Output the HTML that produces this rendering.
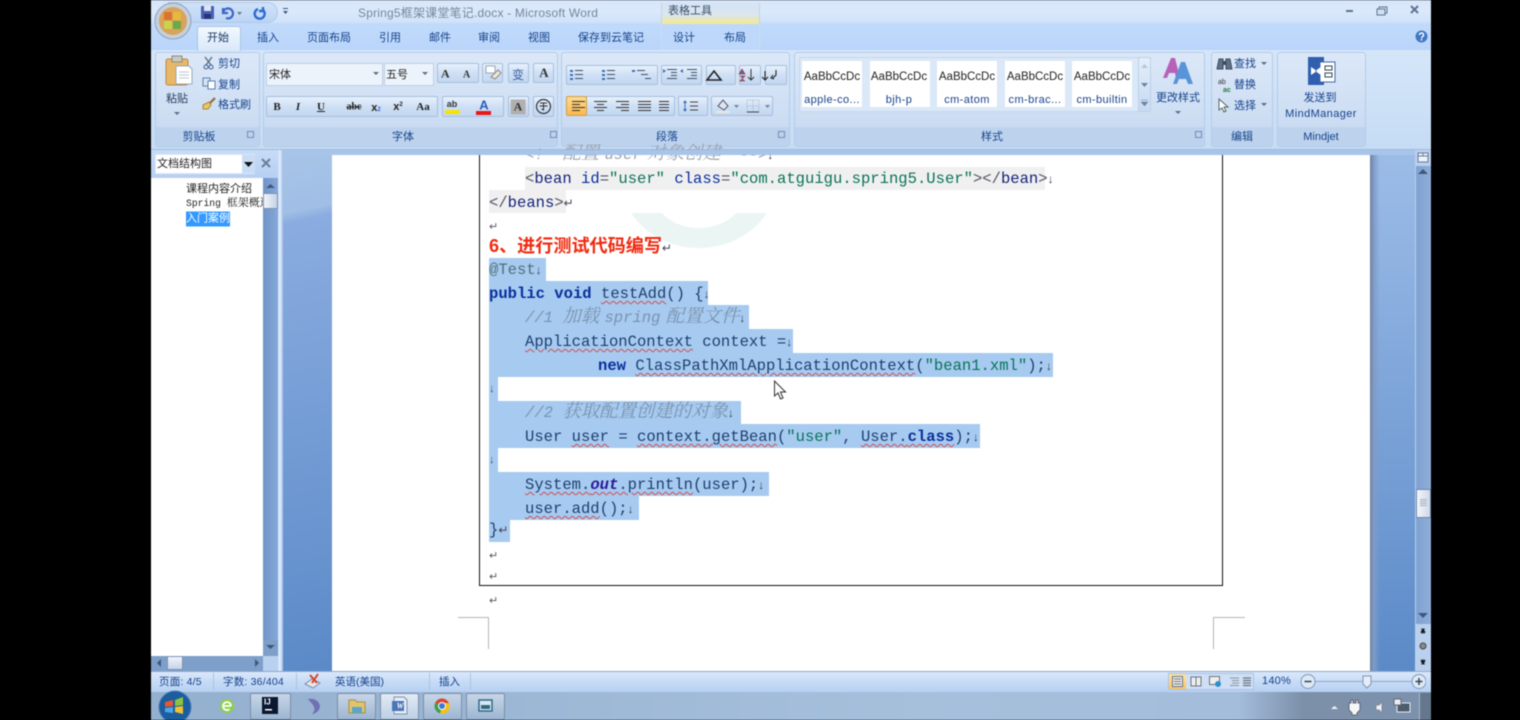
<!DOCTYPE html>
<html lang="zh"><head><meta charset="utf-8"><title>Word</title>
<style>
*{box-sizing:border-box}
html,body{margin:0;padding:0;width:1520px;height:720px;overflow:hidden;background:#000}
#w{position:absolute;left:0;top:0;width:1520px;height:720px;overflow:hidden;background:#000;filter:blur(.5px);font-family:"Liberation Sans","Noto Sans CJK SC",sans-serif}
#w div,#w span.a,#w svg{position:absolute}
.t{position:absolute;white-space:pre;font-size:11px;line-height:14px;color:#15428b;transform:translate(-50%,calc(-50% + 1px))}
.l{position:absolute;white-space:pre;font-size:11px;line-height:14px;color:#15428b;transform:translateY(calc(-50% + 1px))}
.g{background:linear-gradient(#dce8f8,#c6d9f1);border:1px solid #b3cbe8;border-radius:3px;top:52px;height:95px}
.gb{left:0;right:0;bottom:0;height:19px;background:#bdd3ed;border-radius:0 0 3px 3px}
.b{background:linear-gradient(#e8f1fc,#cfe0f5 50%,#c3d7f0);border:1px solid #a5bfdd;border-radius:2px}
.sw{background:#fff;top:61px;width:60px;height:46px}
.c{position:absolute;white-space:pre;font-family:"Liberation Mono","Noto Serif CJK SC",monospace;font-size:15.55px;line-height:24px;height:24px;color:#1f3f6f;transform:translateY(calc(-50% + 1px))}
.z{font-family:"Noto Serif CJK SC",serif;font-size:18.4px;line-height:0}
.ws{word-spacing:-4px}
.sel{background:#a6caf0;left:489px}
.k{color:#0a2f9c;font-weight:bold}.s{color:#0b7358}.m{color:#7b93ad;font-style:italic}
.u{text-decoration:underline wavy #d05050 1px;text-underline-offset:2px}
.r{font-size:12px;color:#445;font-style:normal;font-weight:normal;font-family:"Liberation Sans",sans-serif}
.ret{position:absolute;left:489px;font-size:11px;line-height:10px;color:#556;transform:translateY(-50%)}
.sb{font-size:10.5px}
</style></head><body><div id="w">

<!-- window -->
<div style="left:151px;top:0;width:1280px;height:720px;background:#c4dbf8"></div>
<div style="left:151px;top:0;width:1280px;height:23px;background:linear-gradient(#d6e6fa,#dbe9fb 50%,#cfe2f9)"></div>
<div style="left:151px;top:23px;width:1280px;height:27px;background:linear-gradient(#c2dbfb,#b9d5fa)"></div>
<div style="left:151px;top:50px;width:1280px;height:100px;background:linear-gradient(#d5e6f9,#c6dcf5);border-bottom:1px solid #9fbbdc"></div>

<!-- QAT -->
<div style="left:168px;top:2px;width:110px;height:21px;background:linear-gradient(#cfe2f9,#bcd5f5);border:1px solid #b0c9e8;border-radius:0 11px 11px 0"></div>
<!-- office orb -->
<svg style="left:154px;top:2px" width="38" height="38" viewBox="0 0 38 38"><circle cx="19" cy="19" r="18" fill="#c4d0de" stroke="#8ea2b8"/><circle cx="19" cy="19" r="14" fill="#d9a35a"/><rect x="10" y="10" width="8" height="8" fill="#d9742f"/><rect x="19" y="10" width="8" height="8" fill="#e8b93c"/><rect x="10" y="19" width="8" height="8" fill="#c9d34c"/><rect x="19" y="19" width="8" height="8" fill="#6aa84a"/></svg>
<svg style="left:200px;top:5px" width="90" height="16" viewBox="0 0 90 16"><rect x="1" y="1" width="13" height="13" fill="#4a5fb0" rx="1"/><rect x="4" y="1" width="7" height="5" fill="#dde5f5"/><rect x="4" y="9" width="7" height="5" fill="#26357a"/><path d="M23 8a5 5 0 1 1 3 5M23 3v5h5" fill="none" stroke="#3d66c8" stroke-width="2.2"/><path d="M37 7h5l-2.500 3z" fill="#667c9c"/><path d="M58 4a5 5 0 1 0 5 1M63 2v4h-4" fill="none" stroke="#2f6bd0" stroke-width="2.400"/><path d="M83 6h5l-2.500 3zM83 3h5v1h-5z" fill="#3e5878"/></svg>

<!-- title -->
<div class="l" style="left:358px;top:12px;font-size:12px;color:#76869c;letter-spacing:.2px">Spring5框架课堂笔记.docx - Microsoft Word</div>
<div style="left:661px;top:3px;width:99px;height:21px;background:linear-gradient(#d4e3f6,#dbe6ee 55%,#f5e98e);border-left:1px solid #c2d2e6;border-right:1px solid #c2d2e6"></div>
<div style="left:661px;top:24px;width:99px;height:26px;background:#bdd8fa;border-left:1px solid #c9ddf5;border-right:1px solid #c9ddf5"></div>
<div class="l" style="left:668px;top:10px;color:#3c4e68">表格工具</div>
<svg style="left:1335px;top:3px" width="90" height="14" viewBox="0 0 90 14"><rect x="11" y="7" width="7" height="2" fill="#5f748e"/><rect x="44" y="4" width="8" height="6" fill="none" stroke="#5f748e"/><rect x="42" y="6" width="8" height="6" fill="#cfe0f6" stroke="#5f748e"/><path d="M76 3l7 7M83 3l-7 7" stroke="#5f748e" stroke-width="2"/></svg>

<!-- tabs -->
<div style="left:197px;top:26px;width:44px;height:25px;background:linear-gradient(#f3f8fe,#d9e8fa);border:1px solid #a9c4e4;border-bottom:none;border-radius:3px 3px 0 0"></div>
<div class="t" style="left:218px;top:37px;color:#15345f">开始</div>
<div class="t" style="left:268px;top:37px">插入</div>
<div class="t" style="left:329px;top:37px">页面布局</div>
<div class="t" style="left:390px;top:37px">引用</div>
<div class="t" style="left:440px;top:37px">邮件</div>
<div class="t" style="left:489px;top:37px">审阅</div>
<div class="t" style="left:539px;top:37px">视图</div>
<div class="t" style="left:611px;top:37px">保存到云笔记</div>
<div class="t" style="left:684px;top:37px">设计</div>
<div class="t" style="left:735px;top:37px">布局</div>
<svg style="left:1414px;top:29px" width="15" height="15" viewBox="0 0 15 15"><circle cx="7.500" cy="7.500" r="6.500" fill="#3f78c8" stroke="#c4d6ec"/><path d="M5.500 6a2 2 0 1 1 3 1.700c-.8.500-1 .8-1 1.500" fill="none" stroke="#fff" stroke-width="1.400"/><rect x="6.800" y="10" width="1.500" height="1.500" fill="#fff"/></svg>

<!-- groups -->
<div class="g" style="left:155px;width:105px"><div class="gb"></div></div>
<div class="g" style="left:263px;width:295px"><div class="gb"></div></div>
<div class="g" style="left:561px;width:229px"><div class="gb"></div></div>
<div class="g" style="left:794px;width:411px"><div class="gb"></div></div>
<div class="g" style="left:1211px;width:62px"><div class="gb"></div></div>
<div class="g" style="left:1277px;width:89px"><div class="gb"></div></div>
<div class="t" style="left:199px;top:136px">剪贴板</div>
<div class="t" style="left:403px;top:136px">字体</div>
<div class="t" style="left:667px;top:136px">段落</div>
<div class="t" style="left:992px;top:136px">样式</div>
<div class="t" style="left:1242px;top:136px">编辑</div>
<div class="t" style="left:1321px;top:136px">Mindjet</div>
<svg style="left:247px;top:131px" width="960" height="9" viewBox="0 0 960 9"><g fill="none" stroke="#6f8fb5"><rect x=".5" y=".5" width="6" height="6"/><rect x="303.500" y=".5" width="6" height="6"/><rect x="531.500" y=".5" width="6" height="6"/><rect x="948.500" y=".5" width="6" height="6"/></g></svg>

<!-- clipboard -->
<svg style="left:165px;top:55px" width="28" height="32" viewBox="0 0 28 32"><rect x="1" y="4" width="22" height="26" rx="2" fill="#e8b868" stroke="#b98a40"/><rect x="7" y="1" width="10" height="6" fill="#c9c9c0" stroke="#8a8a80"/><path d="M11 11h13l3 3v15H11z" fill="#fff" stroke="#9aa8b8"/><path d="M14 17h10M14 20h10M14 23h10" stroke="#bcc6d2"/></svg>
<div class="t" style="left:177px;top:98px;color:#253a58">粘贴</div>
<svg style="left:174px;top:112px" width="7" height="5" viewBox="0 0 7 5"><path d="M0 0h6l-3 3z" fill="#5a6f8c"/></svg>
<svg style="left:202px;top:56px" width="14" height="56" viewBox="0 0 14 56"><path d="M3 1l6 8M10 1L4 9" stroke="#5a6b80" stroke-width="1.300"/><circle cx="4" cy="11" r="2" fill="none" stroke="#3d5f98"/><circle cx="9" cy="11" r="2" fill="none" stroke="#3d5f98"/><rect x="1" y="22" width="7" height="8" fill="#d8e4f5" stroke="#5a7fb0"/><rect x="6" y="25" width="7" height="8" fill="#fff" stroke="#5a7fb0"/><path d="M13 42l-6 6" stroke="#8a6a30" stroke-width="2"/><path d="M1 49l6-3 2 3-3 4-5 0z" fill="#e9c764" stroke="#a88838"/></svg>
<div class="l" style="left:218px;top:63px">剪切</div>
<div class="l" style="left:218px;top:84px">复制</div>
<div class="l" style="left:218px;top:104px">格式刷</div>

<!-- font -->
<div style="left:266px;top:63px;width:117px;height:23px;background:#edf3fb;border:1px solid #bcd0e8"></div>
<div style="left:384px;top:63px;width:50px;height:23px;background:#edf3fb;border:1px solid #bcd0e8"></div>
<div class="l" style="left:269px;top:74px;color:#222">宋体</div>
<div class="l" style="left:386px;top:74px;color:#222">五号</div>
<svg style="left:373px;top:72px" width="55" height="5" viewBox="0 0 55 5"><path d="M0 0h6l-3 3zM49 0h6l-3 3z" fill="#5a6f8c"/></svg>
<div class="b" style="left:437px;top:63px;width:42px;height:20px"></div>
<div class="l" style="left:441px;top:73px;font:bold 12px 'Liberation Serif',serif;color:#333">A</div>
<div class="l" style="left:463px;top:74px;font:bold 10px 'Liberation Serif',serif;color:#333">A</div>
<div class="b" style="left:482px;top:63px;width:21px;height:20px"></div>
<svg style="left:484px;top:65px" width="18" height="16" viewBox="0 0 18 16"><rect x="2" y="1" width="9" height="7" fill="#fff" stroke="#98a6b8"/><path d="M7 12l7-7 3 3-6 6z" fill="#f2e8d8" stroke="#8a8a8a"/></svg>
<div class="b" style="left:508px;top:63px;width:21px;height:20px"></div>
<div class="t" style="left:518px;top:74px;font-size:12px;color:#3b5fa0">变</div>
<div class="b" style="left:533px;top:63px;width:21px;height:20px"></div>
<div class="t" style="left:544px;top:72px;font:bold 13px 'Liberation Serif',serif;color:#333">A</div>

<div class="b" style="left:266px;top:96px;width:172px;height:21px"></div>
<div class="t" style="left:277px;top:106px;font:bold 11px 'Liberation Serif',serif;color:#222">B</div>
<div class="t" style="left:298px;top:106px;font:italic bold 11px 'Liberation Serif',serif;color:#222">I</div>
<div class="t" style="left:321px;top:106px;font:bold 11px 'Liberation Serif',serif;color:#222;text-decoration:underline">U</div>
<div class="t" style="left:354px;top:106px;font:bold 10px 'Liberation Serif',serif;color:#222;text-decoration:line-through">abc</div>
<div class="t" style="left:376px;top:107px;font:bold 11px 'Liberation Sans',sans-serif;color:#222">x<span style="font-size:6px;color:#36c">2</span></div>
<div class="t" style="left:398px;top:106px;font:bold 11px 'Liberation Sans',sans-serif;color:#222">x<span style="font-size:6px;vertical-align:4px">2</span></div>
<div class="t" style="left:423px;top:106px;font:bold 11px 'Liberation Serif',serif;color:#222">Aa</div>
<div class="b" style="left:442px;top:96px;width:62px;height:21px"></div>
<div class="t" style="left:452px;top:103px;font:bold 9px 'Liberation Sans',sans-serif;color:#333">ab</div>
<div style="left:445px;top:110px;width:15px;height:4px;background:#f7e300"></div>
<div class="t" style="left:484px;top:104px;font:bold 13px 'Liberation Sans',sans-serif;color:#2c5fb8">A</div>
<div style="left:476px;top:111px;width:15px;height:4px;background:#e81818"></div>
<div class="b" style="left:508px;top:96px;width:21px;height:21px"></div>
<div class="t" style="left:518px;top:106px;font:bold 12px 'Liberation Serif',serif;color:#333;background:#b0b0b0;padding:0 3px">A</div>
<div class="b" style="left:533px;top:96px;width:21px;height:21px"></div>
<svg style="left:535px;top:98px" width="17" height="17" viewBox="0 0 17 17"><circle cx="8.500" cy="8.500" r="7" fill="none" stroke="#333" stroke-width="1.200"/><path d="M5 5h7M8.500 5v7l-2-1M4.500 8h8" stroke="#333" fill="none"/></svg>

<!-- paragraph -->
<div class="b" style="left:566px;top:65px;width:92px;height:20px"></div>
<div class="b" style="left:661px;top:65px;width:41px;height:20px"></div>
<div class="b" style="left:706px;top:65px;width:30px;height:20px"></div>
<div class="b" style="left:739px;top:65px;width:22px;height:20px"></div>
<div class="b" style="left:765px;top:65px;width:22px;height:20px"></div>
<svg style="left:569px;top:68px" width="216" height="15" viewBox="0 0 216 15"><g fill="none" stroke="#3e5068" stroke-width="1.100"><path d="M6 2.500h8M6 6.500h8M6 10.500h8M38 2.500h8M38 6.500h8M38 10.500h8M68 2.500h8M72 6.500h7M76 10.500h6"/><path d="M98 1.500h10M102 4.500h6M102 7.500h6M98 10.500h10M118 1.500h10M122 4.500h6M122 7.500h6M118 10.500h10"/><path d="M138 12h14l-7-9z" stroke="#222" stroke-width="1.600"/><path d="M196 3v9M193 9l3 3 3-3M207 2v5l-3 3M204 7l-2 3 3 1" stroke="#222"/></g><g fill="#3b6fb8"><rect x="1" y="2" width="3" height="2"/><rect x="1" y="6" width="3" height="2"/><rect x="1" y="10" width="3" height="2"/><rect x="33" y="2" width="3" height="2"/><rect x="33" y="6" width="3" height="2"/><rect x="33" y="10" width="3" height="2"/><rect x="63" y="2" width="3" height="2"/><path d="M94 1l3 2-3 2zM114 1l-3 2 3 2z"/></g><path d="M173 1l3 5h-6zM171 8h5l-5 5h5" fill="#3b6fb8" stroke="#c0392b" stroke-width=".7"/><path d="M182 1v11M179 9l3 3 3-3" stroke="#333" fill="none"/></svg>
<div class="b" style="left:566px;top:96px;width:109px;height:20px"></div>
<div style="left:566px;top:96px;width:21px;height:20px;background:linear-gradient(#fedb8a,#fdb84f);border:1px solid #c9a050;border-radius:2px"></div>
<svg style="left:569px;top:99px" width="100" height="14" viewBox="0 0 100 14"><g fill="none" stroke="#333" stroke-width="1.100"><path d="M3 2.500h13M3 5.500h8M3 8.500h13M3 11.500h8M25 2.500h13M28 5.500h7M25 8.500h13M28 11.500h7M47 2.500h13M52 5.500h8M47 8.500h13M52 11.500h8M69 2.500h13M69 5.500h13M69 8.500h13M69 11.500h13M90 2.500h12M90 5.500h12M90 8.500h12M90 11.500h12"/></g></svg>
<div class="b" style="left:678px;top:96px;width:30px;height:20px"></div>
<svg style="left:682px;top:99px" width="22" height="14" viewBox="0 0 22 14"><path d="M3 1l2 3H1zM3 13l2-3H1z" fill="#3b6fb8"/><path d="M3 4v6" stroke="#3b6fb8"/><path d="M8 3h8M8 7h8M8 11h8" stroke="#444"/></svg>
<div class="b" style="left:711px;top:96px;width:62px;height:20px"></div>
<svg style="left:715px;top:98px" width="56" height="16" viewBox="0 0 56 16"><path d="M3 8l5-6 5 6-4 4z" fill="#dce6f2" stroke="#556"/><rect x="1" y="13" width="14" height="2" fill="#e8e8e0"/><path d="M19 7h5l-2.500 3zM50 7h5l-2.500 3z" fill="#6d84a2"/><rect x="32" y="2" width="12" height="12" fill="none" stroke="#aab4c2" stroke-dasharray="1 1"/><path d="M38 2v12M32 8h12" stroke="#aab4c2" stroke-dasharray="1 1"/><path d="M32 14h12" stroke="#444"/></svg>

<!-- styles -->
<div style="left:799px;top:57px;width:352px;height:55px;background:#dbe8f8;border:1px solid #c5d7ee;border-radius:2px"></div>
<div class="sw" style="left:802px"></div><div class="sw" style="left:870px"></div><div class="sw" style="left:937px"></div><div class="sw" style="left:1005px"></div><div class="sw" style="left:1072px"></div>
<div class="t" style="left:832px;top:76px;color:#222;font-size:11.500px">AaBbCcDc</div>
<div class="t" style="left:899px;top:76px;color:#222;font-size:11.500px">AaBbCcDc</div>
<div class="t" style="left:967px;top:76px;color:#222;font-size:11.500px">AaBbCcDc</div>
<div class="t" style="left:1035px;top:76px;color:#222;font-size:11.500px">AaBbCcDc</div>
<div class="t" style="left:1102px;top:76px;color:#222;font-size:11.500px">AaBbCcDc</div>
<div class="t" style="left:832px;top:99px;letter-spacing:.4px">apple-co...</div>
<div class="t" style="left:899px;top:99px;letter-spacing:.4px">bjh-p</div>
<div class="t" style="left:967px;top:99px;letter-spacing:.4px">cm-atom</div>
<div class="t" style="left:1035px;top:99px;letter-spacing:.4px">cm-brac...</div>
<div class="t" style="left:1102px;top:99px;letter-spacing:.4px">cm-builtin</div>
<div style="left:1138px;top:57px;width:13px;height:55px;background:linear-gradient(#e4eefa,#c7daf2);border:1px solid #bcd0e8;border-radius:2px"></div>
<svg style="left:1140px;top:63px" width="9" height="44" viewBox="0 0 9 44"><path d="M1 5h7L4.500 1z" fill="#b7c6da"/><path d="M1 20h7l-3.500 4z" fill="#6d84a2"/><path d="M1 37h7M1 39h7l-3.500 4z" stroke="#6d84a2" stroke-width=".5" fill="#6d84a2"/></svg>
<svg style="left:1162px;top:57px" width="32" height="28" viewBox="0 0 32 28"><path d="M1 21L9 1h4l5 20h-4l-1-5H7l-2 5z" fill="#b861b8"/><path d="M11 27L19 5h4l8 22h-5l-2-5h-7l-2 5z" fill="#5a94d8"/></svg>
<div class="t" style="left:1178px;top:97px">更改样式</div>
<svg style="left:1175px;top:111px" width="7" height="5" viewBox="0 0 7 5"><path d="M0 0h6l-3 3z" fill="#5a6f8c"/></svg>

<!-- editing -->
<svg style="left:1216px;top:56px" width="18" height="58" viewBox="0 0 18 58"><path d="M1 13l2-10h4v10zM10 13V3h4l2 10z" fill="#5f7288" stroke="#3d4c60"/><rect x="7" y="5" width="3" height="4" fill="#3d4c60"/><text x="2" y="28" font-size="7" fill="#333" font-family="Liberation Sans">ab</text><text x="7" y="36" font-size="7" font-weight="bold" fill="#2a7a3a" font-family="Liberation Sans">ac</text><path d="M3 43l0 11 3-2 2 4 2-1-2-4h4z" fill="#fff" stroke="#566"/></svg>
<div class="l" style="left:1234px;top:63px">查找</div>
<div class="l" style="left:1234px;top:84px">替换</div>
<div class="l" style="left:1234px;top:105px">选择</div>
<svg style="left:1261px;top:62px" width="6" height="44" viewBox="0 0 6 44"><path d="M0 0h6l-3 3zM0 41h6l-3 3z" fill="#5a6f8c"/></svg>

<!-- mindjet -->
<svg style="left:1307px;top:56px" width="30" height="30" viewBox="0 0 30 30"><rect x="1" y="1" width="16" height="28" fill="#2f5fae"/><rect x="13" y="6" width="15" height="20" fill="#fff" stroke="#4468a8"/><path d="M4 11l6 4-6 4zM14 11l-6 4 6 4z" fill="#fff"/><path d="M18 10h7v4h-7zM18 17h7v4h-7z" fill="none" stroke="#345"/></svg>
<div class="t" style="left:1320px;top:97px">发送到</div>
<div class="t" style="left:1321px;top:113px;letter-spacing:.4px">MindManager</div>

<!-- work area -->
<div style="left:151px;top:150px;width:1280px;height:521px;background:linear-gradient(#9dbde8,#5b8ac8)"></div>
<div style="left:283px;top:150px;width:49px;height:521px;background:linear-gradient(168deg,#a8c4e8 0,#a0bee6 12%,#8aace0 14%,#5b8ac8 100%)"></div>
<div style="left:1370px;top:150px;width:45px;height:521px;background:linear-gradient(90deg,#6f8098 0,#7f9cc8 8%,transparent 22%),linear-gradient(#9dbde8,#5b8ac8)"></div>
<div style="left:332px;top:155px;width:1038px;height:516px;background:#fff"></div>
<div style="left:283px;top:150px;width:1132px;height:5px;background:#a8c4ea"></div>

<!-- nav pane -->
<div style="left:151px;top:150px;width:127px;height:28px;background:linear-gradient(#c7dcf7,#b6d0f3)"></div>
<div style="left:278px;top:150px;width:5px;height:521px;background:linear-gradient(90deg,#c8def8,#e3effc 40%,#9fbde6)"></div>
<div style="left:155px;top:154px;width:100px;height:20px;background:#fff;border:1px solid #dbe8f9"></div>
<div style="left:242px;top:155px;width:13px;height:18px;background:#c9dcf5"></div>
<svg style="left:244px;top:162px" width="9" height="5" viewBox="0 0 9 5"><path d="M0 0h9L4.500 5z" fill="#111"/></svg>
<div class="l" style="left:157px;top:163px;color:#222">文档结构图</div>
<svg style="left:261px;top:158px" width="10" height="10" viewBox="0 0 10 10"><path d="M1 1l8 8M9 1l-8 8" stroke="#6b7f99" stroke-width="2"/></svg>
<div style="left:151px;top:178px;width:112px;height:478px;background:#fff"></div>
<div style="left:263px;top:178px;width:15px;height:478px;background:linear-gradient(90deg,#6e94c8,#86a8d8)"></div>
<div style="left:263px;top:193px;width:15px;height:16px;background:linear-gradient(90deg,#f2f5fa,#c5d3e6);border:1px solid #7a93b8"></div>
<svg style="left:265px;top:183px" width="11" height="5" viewBox="0 0 11 5"><path d="M1 5h9L5.500 1z" fill="#3e587c"/></svg>
<div style="left:263px;top:640px;width:15px;height:16px;background:#7e9fc9"></div>
<svg style="left:265px;top:645px" width="11" height="5" viewBox="0 0 11 5"><path d="M1 0h9L5.500 4z" fill="#3e587c"/></svg>
<div class="l" style="left:186px;top:188px;color:#222">课程内容介绍</div>
<div class="l" style="left:186px;top:203px;color:#222;width:77px;overflow:hidden;font-size:9.700px;font-family:'Liberation Mono','Noto Serif CJK SC',monospace">Spring <span style="font-size:11px">框架概述</span></div>
<div class="l" style="left:186px;top:218px;color:#fff;background:#3399ff;line-height:15px">入门案例</div>
<div style="left:151px;top:656px;width:112px;height:15px;background:#7e9fc9"></div>
<div style="left:263px;top:656px;width:15px;height:15px;background:#b9d0ee"></div>
<div style="left:167px;top:656px;width:16px;height:14px;background:linear-gradient(#f2f5fa,#c5d3e6);border:1px solid #7a93b8"></div>
<svg style="left:156px;top:659px" width="104" height="9" viewBox="0 0 104 9"><path d="M5 0v8L1 4zM99 0v8l4-4z" fill="#3e587c"/></svg>

<!-- vertical scrollbar -->
<div style="left:1415px;top:150px;width:16px;height:521px;background:#b9d0ee"></div>
<div style="left:1416px;top:166px;width:15px;height:458px;background:linear-gradient(90deg,#7fa2d2,#8fadd8)"></div>
<svg style="left:1417px;top:152px" width="12" height="12" viewBox="0 0 12 12"><rect x="1" y="1" width="10" height="9" fill="#eef3fa" stroke="#667a98"/><path d="M1 4h10M6 1v3" stroke="#667a98"/></svg>
<svg style="left:1418px;top:169px" width="10" height="5" viewBox="0 0 10 5"><path d="M0 5h10L5 0z" fill="#3e587c"/></svg>
<div style="left:1416px;top:489px;width:15px;height:29px;background:linear-gradient(90deg,#f4f6fa,#cdd9e9);border:1px solid #7088ad"></div>
<div style="left:1420px;top:499px;width:7px;height:8px;background:repeating-linear-gradient(#a8b4c4 0 1px,#dfe6ef 1px 2px)"></div>
<svg style="left:1418px;top:613px" width="10" height="6" viewBox="0 0 10 6"><path d="M0 0h10L5 5z" fill="#3e587c"/></svg>
<svg style="left:1418px;top:627px" width="10" height="40" viewBox="0 0 10 40"><path d="M3 2h4M5 2L3 5h4zM3 6h4" stroke="#111" stroke-width=".7" fill="#111"/><circle cx="5" cy="19" r="3" fill="#8b8b8b" stroke="#444"/><path d="M3 33h4M5 37l-2-3h4zM3 37h4" stroke="#111" stroke-width=".7" fill="#111"/></svg>

<!-- page content -->
<div style="left:525px;top:167px;width:520px;height:23px;background:#f0f0f0"></div>
<div style="left:489px;top:190px;width:77px;height:23px;background:#f0f0f0"></div>
<svg style="left:630px;top:213px" width="140" height="36" viewBox="0 0 140 36"><path d="M1 0c15 22 40 35 68 35s53-13 68-35h-31c-8 9-22 15-37 15S40 9 32 0z" fill="#ebf6f4"/></svg>
<div style="left:479px;top:155px;width:1px;height:430px;background:#111"></div>
<div style="left:1222px;top:155px;width:1px;height:430px;background:#111"></div>
<div style="left:479px;top:585px;width:744px;height:1px;background:#111"></div>

<div class="sel" style="top:258px;width:57px;height:23px"></div>
<div class="sel" style="top:281px;width:219px;height:24px"></div>
<div class="sel" style="top:305px;width:260px;height:24px"></div>
<div class="sel" style="top:329px;width:304px;height:24px"></div>
<div class="sel" style="top:353px;width:564px;height:24px"></div>
<div class="sel" style="top:377px;width:9px;height:24px"></div>
<div class="sel" style="top:401px;width:252px;height:23px"></div>
<div class="sel" style="top:424px;width:491px;height:24px"></div>
<div class="sel" style="top:448px;width:9px;height:24px"></div>
<div class="sel" style="top:472px;width:280px;height:24px"></div>
<div class="sel" style="top:496px;width:150px;height:24px"></div>
<div class="sel" style="top:520px;width:21px;height:22px"></div>

<div class="c" style="left:525px;top:154px;color:#9aa4ae;font-style:italic">&lt;!  <span class="z">配置</span><span class="ws"> user </span><span class="z">对象创建</span>  --&gt;<span class="r">↓</span></div>
<div style="left:480px;top:150px;width:742px;height:5px;background:#a8c4ea"></div>
<div class="c" style="left:525px;top:178px;color:#556">&lt;<span style="color:#15237a">bean</span> <span style="color:#0a2f9c">id</span>=<span class="s">"user"</span> <span style="color:#0a2f9c">class</span>=<span class="s">"com.atguigu.spring5.User"</span>&gt;&lt;/<span style="color:#15237a">bean</span>&gt;<span class="r">↓</span></div>
<div class="c" style="left:489px;top:202px;color:#556">&lt;/<span style="color:#15237a">beans</span>&gt;<span class="r">↵</span></div>
<div class="ret" style="top:227px">↵</div>
<div class="c" style="left:489px;top:245px;color:#f02a10;font-family:'Liberation Sans','Noto Sans CJK SC',sans-serif;font-weight:bold;font-size:18.1px">6、进行测试代码编写<span class="r">↵</span></div>
<div class="c" style="left:489px;top:269px;color:#4f7078">@Test<span class="r">↓</span></div>
<div class="c" style="left:489px;top:293px"><span class="k">public void</span> <span class="u">testAdd</span>() {<span class="r">↓</span></div>
<div class="c m" style="left:525px;top:317px">//1 <span class="z">加载</span><span class="ws"> spring </span><span class="z">配置文件</span><span class="r">↓</span></div>
<div class="c" style="left:525px;top:341px"><span class="u">ApplicationContext</span> context =<span class="r">↓</span></div>
<div class="c" style="left:598px;top:365px"><span class="k">new</span> <span class="u">ClassPathXmlApplicationContext</span>(<span class="s">"bean1.xml"</span>);<span class="r">↓</span></div>
<div class="ret" style="top:389px">↓</div>
<div class="c m" style="left:525px;top:412px">//2 <span class="z">获取配置创建的对象</span><span class="r">↓</span></div>
<div class="c" style="left:525px;top:436px">User <span class="u">user</span> = <span class="u">context.getBean</span>(<span class="s">"user"</span>, <span class="u">User.<span style="color:#0a2f9c;font-weight:bold">class</span></span>);<span class="r">↓</span></div>
<div class="ret" style="top:460px">↓</div>
<div class="c" style="left:525px;top:484px"><span class="u">System.<span style="color:#2a1a9a;font-style:italic;font-weight:bold">out</span>.println</span>(user);<span class="r">↓</span></div>
<div class="c" style="left:525px;top:508px"><span class="u">user.add</span>();<span class="r">↓</span></div>
<div class="c" style="left:489px;top:529px">}<span class="r">↵</span></div>
<div class="ret" style="top:556px">↵</div>
<div class="ret" style="top:577px">↵</div>
<div class="ret" style="top:601px">↵</div>

<!-- crop marks -->
<div style="left:458px;top:617px;width:31px;height:1px;background:#b5b5b5"></div>
<div style="left:488px;top:617px;width:1px;height:32px;background:#b5b5b5"></div>
<div style="left:1213px;top:617px;width:32px;height:1px;background:#b5b5b5"></div>
<div style="left:1213px;top:617px;width:1px;height:32px;background:#b5b5b5"></div>

<!-- cursor -->
<svg style="left:773px;top:380px" width="14" height="20" viewBox="0 0 14 20"><path d="M1.500 1v15l3.500-3 2.500 6 2.500-1-2.500-6h5z" fill="#fff" stroke="#333"/></svg>

<!-- status bar -->
<div style="left:151px;top:671px;width:1280px;height:21px;background:linear-gradient(#dbe8fa,#c6dbf6 50%,#b7d1f3);border-top:1px solid #8fa9cc"></div>
<div class="l sb" style="left:159px;top:681px;letter-spacing:.2px">页面: 4/5</div>
<div class="l sb" style="left:223px;top:681px;letter-spacing:.2px">字数: 36/404</div>
<div class="l sb" style="left:335px;top:681px">英语(美国)</div>
<div class="l sb" style="left:439px;top:681px">插入</div>
<div style="left:213px;top:673px;width:1px;height:17px;background:#aac3e2"></div>
<div style="left:296px;top:673px;width:1px;height:17px;background:#aac3e2"></div>
<div style="left:429px;top:673px;width:1px;height:17px;background:#aac3e2"></div>
<div style="left:470px;top:673px;width:1px;height:17px;background:#aac3e2"></div>
<svg style="left:304px;top:672px" width="18" height="18" viewBox="0 0 18 18"><path d="M1 12l7-5 8 4-7 5z" fill="#e6e6ea" stroke="#7d8ca8"/><path d="M6 3l7 8M14 2L8 11" stroke="#d8452e" stroke-width="2"/></svg>
<div style="left:1168px;top:673px;width:86px;height:17px;background:#cfe0f6;border:1px solid #a9c3e3"></div>
<div style="left:1169px;top:674px;width:17px;height:15px;background:linear-gradient(#fee3a4,#fcc35e)"></div>
<svg style="left:1171px;top:675px" width="80" height="13" viewBox="0 0 80 13"><g fill="none" stroke="#6b7480"><rect x="1.500" y="1.500" width="10" height="10" fill="#eee"/><path d="M3 4h7M3 6.500h7M3 9h7"/><path d="M20 2h5v9h-5zM25 2h5v9h-5z" fill="#eee"/><rect x="38.500" y="1.500" width="10" height="8" fill="#eee"/><path d="M59 3h9M61 5.500h7M61 8h7M59 10.500h9" stroke="#8a94a0"/><path d="M72 3h8M72 5.500h8M72 8h8M72 10.500h8" stroke-width="1.300"/></g><circle cx="47" cy="9" r="3" fill="#2d8fc9"/></svg>
<div class="l sb" style="left:1262px;top:680px;font-size:11px;letter-spacing:.2px">140%</div>
<div style="left:1315px;top:681px;width:97px;height:1px;background:#8fa9cc"></div>
<svg style="left:1300px;top:673px" width="126" height="17" viewBox="0 0 126 17"><circle cx="8" cy="8.500" r="7" fill="#dfe9f6" stroke="#7e97b8"/><path d="M4.500 8.500h7" stroke="#345" stroke-width="1.500"/><path d="M63 3h8v8l-4 4-4-4z" fill="#e6edf6" stroke="#7e97b8"/><circle cx="119" cy="8.500" r="7" fill="#dfe9f6" stroke="#7e97b8"/><path d="M115.500 8.500h7M119 5v7" stroke="#345" stroke-width="1.500"/></svg>

<!-- taskbar -->
<div style="left:151px;top:692px;width:1280px;height:28px;background:linear-gradient(90deg,#94b0cf,#a6c0dc 60%,#a3bddb 85%,#7c90a9 90%,#7d92ad 100%)"></div>
<div style="left:1419px;top:693px;width:12px;height:27px;background:#65778c;border-left:1px solid #a8b8c8"></div>
<div class="b" style="left:250px;top:693px;width:41px;height:27px;background:linear-gradient(#c7d6e6,#9db6d2);border:1px solid #7a8ea6"></div>
<div class="b" style="left:337px;top:693px;width:39px;height:27px;background:linear-gradient(#c7d6e6,#9db6d2);border:1px solid #7a8ea6"></div>
<div class="b" style="left:380px;top:693px;width:39px;height:27px;background:linear-gradient(#e2ebf5,#bccfe4);border:1px solid #7a8ea6"></div>
<div class="b" style="left:423px;top:693px;width:39px;height:27px;background:linear-gradient(#c7d6e6,#9db6d2);border:1px solid #7a8ea6"></div>
<div class="b" style="left:466px;top:693px;width:39px;height:27px;background:linear-gradient(#c7d6e6,#9db6d2);border:1px solid #7a8ea6"></div>
<svg style="left:158px;top:690px" width="34" height="30" viewBox="0 0 34 30"><circle cx="17" cy="17" r="16" fill="#1c5d9e" stroke="#4a7fb4"/><path d="M7 12l8-2v6l-8 1z" fill="#e8552f"/><path d="M17 10l8-3v8l-8 1z" fill="#8cc43f"/><path d="M7 18l8-1v6l-8-1z" fill="#4aa7e8"/><path d="M17 17l8-1v8l-8-2z" fill="#f2c12e"/></svg>
<svg style="left:218px;top:696px" width="18" height="20" viewBox="0 0 18 20"><circle cx="9" cy="10" r="7" fill="#8ccf4a"/><path d="M5 10h8M13 10a4 4 0 1 0-1.500 3.200" fill="none" stroke="#fff" stroke-width="1.800"/></svg>
<svg style="left:262px;top:697px" width="16" height="17" viewBox="0 0 16 17"><rect width="16" height="17" fill="#0b1830"/><rect x="3" y="12" width="7" height="1.500" fill="#fff"/></svg>
<div class="l" style="left:264px;top:701px;font:bold 8px 'Liberation Sans',sans-serif;color:#fff">IJ</div>
<svg style="left:306px;top:697px" width="16" height="18" viewBox="0 0 16 18"><path d="M2 2c5-1 11 1 12 7 0 5-5 8-8 8 2-2 3-4 2-7-1-3-4-5-6-8z" fill="#6e72b5"/></svg>
<svg style="left:348px;top:698px" width="18" height="16" viewBox="0 0 18 16"><path d="M1 2h6l2 2h8v11H1z" fill="#e2c46e" stroke="#a88e44"/><path d="M4 9h10v6H4z" fill="#5ba6c8"/></svg>
<svg style="left:391px;top:696px" width="17" height="19" viewBox="0 0 17 19"><path d="M3 1h10l3 3v14H3z" fill="#e4ecf6" stroke="#7d90b0"/><rect x="1" y="5" width="12" height="10" fill="#4c75b8"/></svg>
<div class="t" style="left:400px;top:705px;font:italic bold 8px 'Liberation Serif',serif;color:#fff">W</div>
<svg style="left:434px;top:698px" width="16" height="16" viewBox="0 0 16 16"><circle cx="8" cy="8" r="7.500" fill="#d9452f"/><path d="M8 8L1.500 4.500A7.500 7.500 0 0 0 6 15.300z" fill="#3ea04a"/><path d="M8 8l-2 7.300A7.500 7.500 0 0 0 15 5h-7z" fill="#f4c20d"/><circle cx="8" cy="8" r="3.500" fill="#3c78d8" stroke="#fff"/></svg>
<svg style="left:477px;top:698px" width="17" height="15" viewBox="0 0 17 15"><rect x="2" y="2" width="13" height="11" fill="#dce8f0" stroke="#2f6a88" stroke-width="1.500"/><rect x="4" y="7" width="9" height="4" fill="#2f6a88"/></svg>
<svg style="left:1330px;top:697px" width="90" height="20" viewBox="0 0 90 20"><path d="M1 12h7L4.500 9z" fill="#f2f5f8"/><path d="M21 3h2v3h3V3h2v3h2v7l-3 3v2h-5v-2l-3-3V6h2z" fill="#f4f6f8" stroke="#667"/><path d="M46 8h3l3-3v11l-3-3h-3z" fill="#eef1f5" stroke="#889"/><rect x="67" y="6" width="13" height="9" fill="#4e5c6c" stroke="#e8edf2"/><rect x="64" y="2" width="7" height="6" fill="#e8edf2" stroke="#667"/></svg>
</div></body></html>
